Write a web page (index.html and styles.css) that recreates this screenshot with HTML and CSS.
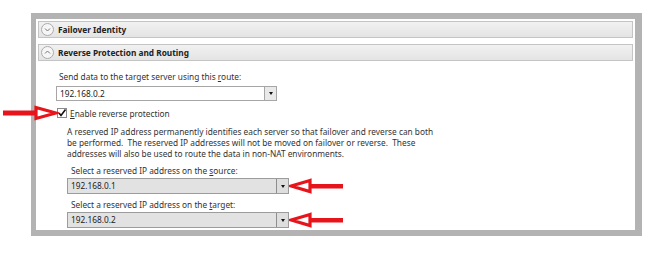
FILE: index.html
```html
<!DOCTYPE html>
<html>

<head>
    <title>Reverse Protection and Routing</title>
    <link rel="stylesheet" href="styles.css">
</head>

<body>
    <!-- Settings panel -->
    <div class="frame">
        <!-- Collapsed section -->
        <div class="section-header">
            <span class="toggle">
                <svg width="9" height="9" viewBox="0 0 9 9"><path d="M2 3.5 L4.5 6 L7 3.5" fill="none" stroke="#777" stroke-width="1"/></svg>
            </span>
            <span class="section-title">Failover Identity</span>
        </div>

        <!-- Expanded section -->
        <div class="section-header">
            <span class="toggle">
                <svg width="9" height="9" viewBox="0 0 9 9"><path d="M2 5.5 L4.5 3 L7 5.5" fill="none" stroke="#777" stroke-width="1"/></svg>
            </span>
            <span class="section-title">Reverse Protection and Routing</span>
        </div>

        <div class="section-body">
            <div class="field-label">Send data to the target server using this <u>r</u>oute:</div>
            <div class="combo combo-white">
                <span class="combo-value">192.168.0.2</span>
                <span class="combo-button"><span class="caret"></span></span>
            </div>

            <div class="check-row">
                <svg class="arrow-left" width="56" height="16" viewBox="0 0 56 16">
                    <rect x="0" y="5.5" width="34" height="5" fill="#e8141b"/>
                    <polygon points="33,2.5 53,8 33,13.5" fill="#fff" stroke="#e8141b" stroke-width="3.2"/>
                </svg>
                <span class="checkbox">
                    <svg width="10" height="10" viewBox="0 0 10 10"><path d="M2 5 L4 7.5 L8.5 1.5" fill="none" stroke="#111" stroke-width="1.6"/></svg>
                </span>
                <span><u>E</u>nable reverse protection</span>
            </div>

            <div class="nested">
                <p class="note">A reserved IP address permanently identifies each server so that failover and reverse can both<br>be performed.&nbsp; The reserved IP addresses will not be moved on failover or reverse.&nbsp; These<br>addresses will also be used to route the data in non-NAT environments.</p>

                <div class="field-label sub-label">Select a reserved IP address on the <u>s</u>ource:</div>
                <div class="combo-row">
                    <div class="combo combo-gray">
                        <span class="combo-value">192.168.0.1</span>
                        <span class="combo-button"><span class="caret"></span></span>
                    </div>
                    <svg class="arrow-right" width="56" height="16" viewBox="0 0 56 16">
                        <polygon points="21,2.5 2,8 21,13.5" fill="#fff" stroke="#e8141b" stroke-width="3.2"/>
                        <rect x="20" y="6" width="34" height="4.5" fill="#e8141b"/>
                    </svg>
                </div>

                <div class="field-label sub-label">Select a reserved IP address on the <u>t</u>arget:</div>
                <div class="combo-row">
                    <div class="combo combo-gray">
                        <span class="combo-value">192.168.0.2</span>
                        <span class="combo-button"><span class="caret"></span></span>
                    </div>
                    <svg class="arrow-right" width="56" height="16" viewBox="0 0 56 16">
                        <polygon points="21,2.5 2,8 21,13.5" fill="#fff" stroke="#e8141b" stroke-width="3.2"/>
                        <rect x="20" y="6" width="34" height="4.5" fill="#e8141b"/>
                    </svg>
                </div>
            </div>
        </div>
    </div>
</body>

</html>
```

FILE: styles.css
```css
/* Page */
body {
    margin: 0;
    background-color: #fff;
    font-family: "Noto Sans", "Open Sans", sans-serif;
    font-size: 8.3px;
    color: #333;
}

/* Gray outer frame */
.frame {
    margin: 13px 0 0 31px;
    width: 595px;
    padding: 2px 2px 2px 2px;
    border: 6px solid #b3b3b3;
    border-left-width: 5px;
    border-right-width: 7px;
    background-color: #fff;
}

/* Section header bars */
.section-header {
    display: flex;
    align-items: center;
    height: 15px;
    padding-left: 2px;
    border: 1px solid #c4c4c4;
    background: linear-gradient(#f1f1f1, #e4e4e4);
}

.section-header + .section-header {
    margin-top: 6px;
}

.toggle {
    display: flex;
    align-items: center;
    justify-content: center;
    width: 11px;
    height: 11px;
    border: 1px solid #ababab;
    border-radius: 50%;
    background: #f6f6f6;
    margin-right: 4px;
}

.section-title {
    font-size: 8.3px;
    font-weight: bold;
    color: #222;
}

/* Expanded section content */
.section-body {
    padding: 10px 0 0 18px;
    line-height: 11px;
}

.field-label {
    padding-left: 3px;
    margin-bottom: 4px;
}

.field-label u,
.check-row u {
    text-decoration-thickness: 1px;
}

/* Combo boxes */
.combo {
    display: flex;
    box-sizing: border-box;
    border: 1px solid #a6a6a6;
}

.combo-white {
    width: 221px;
    height: 15px;
    background: #fff;
}

.combo-gray {
    width: 222px;
    height: 16px;
    background: #e2e2e2;
    border-color: #9c9c9c;
}

.combo-value {
    flex: 1;
    padding-left: 3px;
    line-height: 13px;
    color: #222;
}

.combo-gray .combo-value {
    line-height: 14px;
}

.combo-button {
    display: flex;
    align-items: center;
    justify-content: center;
    width: 11px;
    border-left: 1px solid #a6a6a6;
    background: #e9e9e9;
}

.combo-gray .combo-button {
    background: #dedede;
    border-left-color: #8e8e8e;
}

.caret {
    width: 0;
    height: 0;
    border-left: 2.5px solid transparent;
    border-right: 2.5px solid transparent;
    border-top: 3px solid #111;
}

/* Checkbox row */
.check-row {
    position: relative;
    display: flex;
    align-items: center;
    height: 12px;
    margin-top: 6px;
    padding-left: 1px;
}

.checkbox {
    display: flex;
    width: 10px;
    height: 10px;
    box-sizing: border-box;
    border: 1px solid #8a8a8a;
    background: #fff;
    margin-right: 3px;
}

.checkbox svg {
    margin: -1px;
}

/* Annotation arrows */
.arrow-left {
    position: absolute;
    left: -53px;
    top: -2px;
}

/* Nested reserved IP options */
.nested {
    padding-left: 11px;
}

.note {
    margin: 7px 0 0 0;
    white-space: nowrap;
}

.sub-label {
    padding-left: 4px;
    margin-top: 6px;
    margin-bottom: 2px;
}

.combo-row {
    display: flex;
    align-items: center;
}

.combo-row + .sub-label {
    margin-top: 5px;
}
```
